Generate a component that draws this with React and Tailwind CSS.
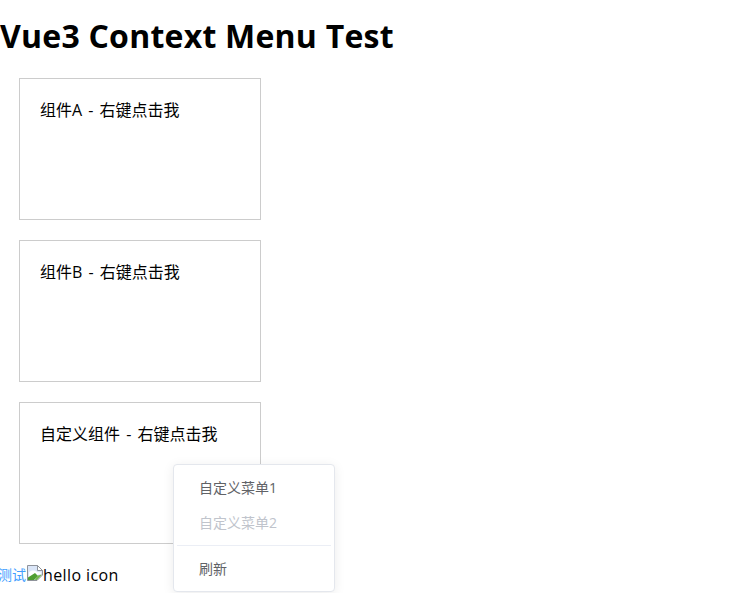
const sans = { fontFamily: '"Open Sans", "Noto Sans CJK SC", sans-serif' };

function Box({ label }) {
  return (
    <div className="mx-[19px] mb-5 h-[142px] w-[242px] border border-[#ccc] px-5 pt-[19px] text-base leading-[24px] [word-spacing:2px]">
      {label}
    </div>
  );
}

function BrokenIcon() {
  return (
    <svg width="16" height="16" viewBox="0 0 16 16" className="-mt-[4px] ml-px block shrink-0">
      <path d="M0.5 0.5H10.5L15.5 5.5V10L10 15.5H0.5Z" fill="#dbe6f8" stroke="#8f939b" />
      <path d="M10.5 0.5V5.5H15.5Z" fill="#fff" stroke="#8f939b" />
      <path d="M2 7.5C4 5 8 5 10 7L14 7.5V9L2 12Z" fill="#fff" />
      <path d="M1 15V12.5L8 8L11 11L7 15Z" fill="#4f9e32" />
      <path d="M9 12.5L11 10.5L15 9.5L10 15H8Z" fill="#76b84e" />
    </svg>
  );
}

export default function App() {
  return (
    <div className="relative h-[593px] w-[736px] overflow-hidden bg-white text-black" style={sans}>
      <h1 className="pt-[14px] pb-[21px] text-[32px] font-bold leading-[43px] tracking-[0.23px]">Vue3 Context Menu Test</h1>
      <Box label="组件A - 右键点击我" />
      <Box label="组件B - 右键点击我" />
      <Box label="自定义组件 - 右键点击我" />
      <div className="-ml-[2px] flex items-center text-base leading-[22px]">
        <a className="text-sm text-[#409eff]">测试</a>
        <BrokenIcon />
        <span className="tracking-[0.4px]">hello icon</span>
      </div>
      <div className="absolute left-[173px] top-[464px] h-[128px] w-[162px] rounded border border-[#e4e7ed] bg-white pt-[5px] pb-[6px] text-sm text-[#606266] shadow-[0_2px_12px_rgba(0,0,0,0.08)]">
        <div className="px-[25px] py-[6px] leading-[23px]">自定义菜单1</div>
        <div className="px-[25px] py-[6px] leading-[23px] text-[#c0c4cc]">自定义菜单2</div>
        <div className="mx-[3px] mt-[5px] mb-[5px] h-px bg-[#ebeef5]" />
        <div className="px-[25px] py-[6px] leading-[23px]">刷新</div>
      </div>
    </div>
  );
}
